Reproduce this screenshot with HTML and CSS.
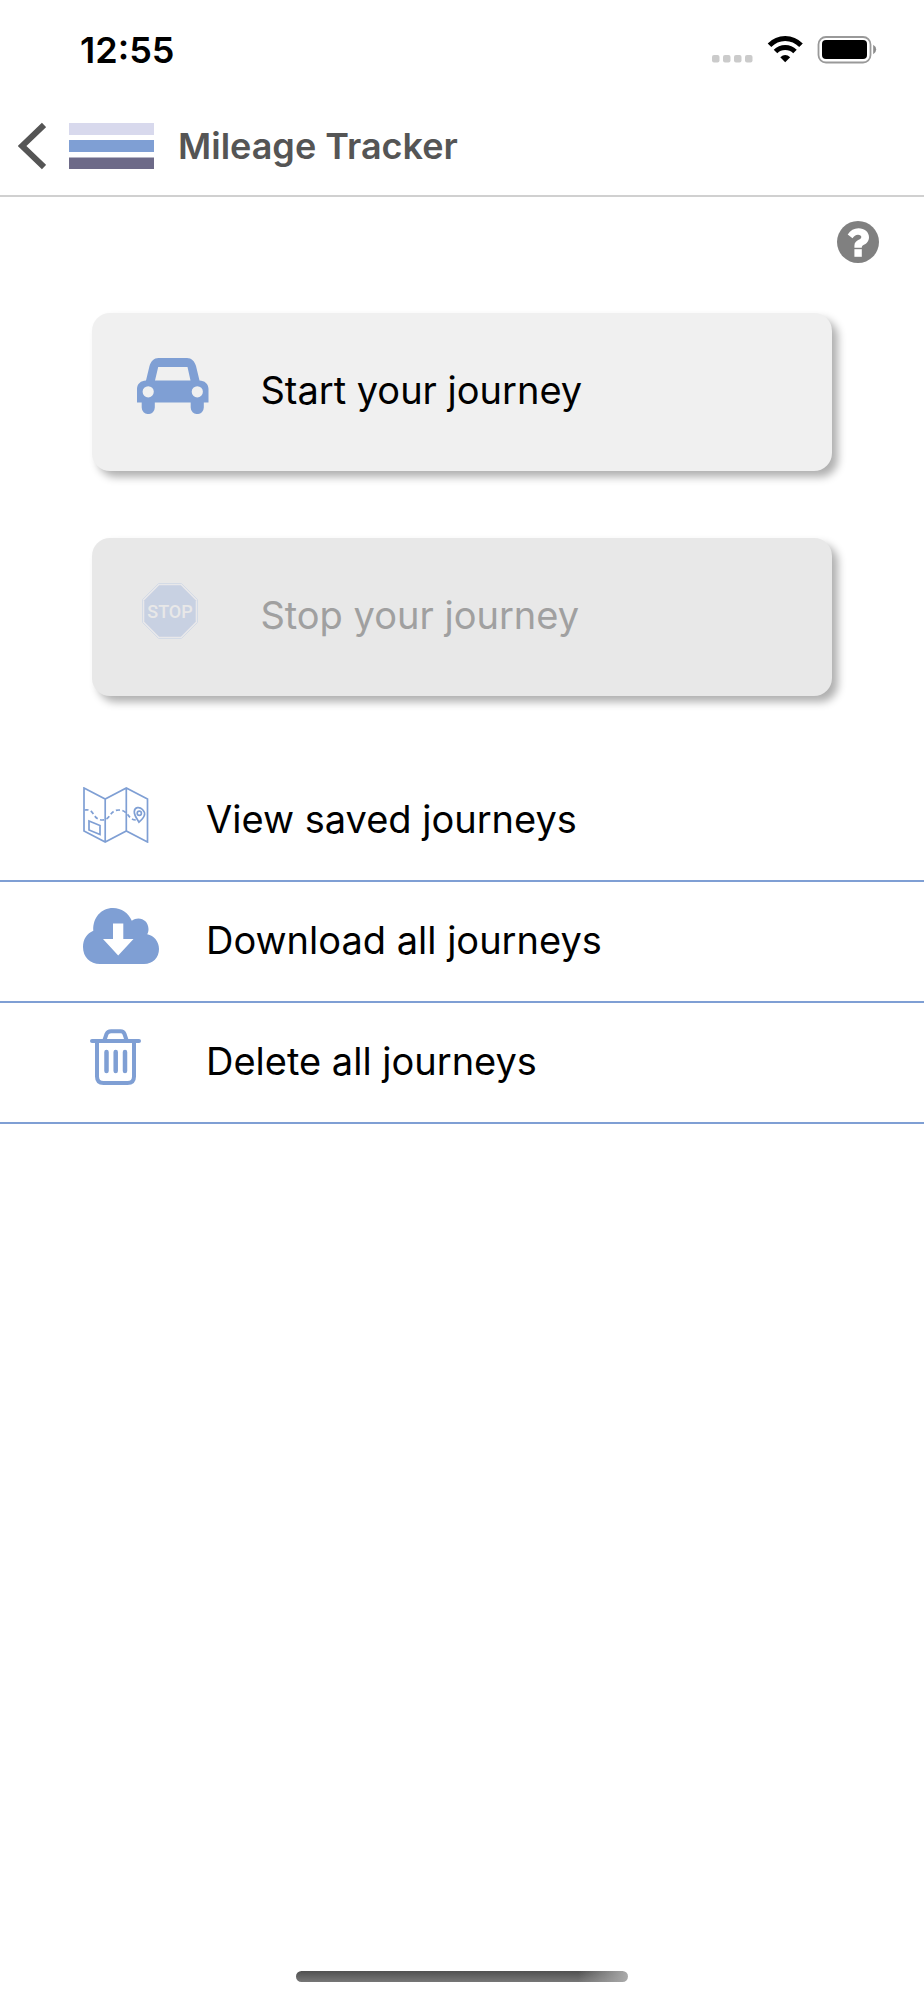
FILE: index.html
```html
<!DOCTYPE html>
<html lang="en">

<head>
    <meta charset="UTF-8">
    <meta name="viewport" content="width=device-width, initial-scale=1.0">
    <title>Mileage Tracker</title>
    <link rel="stylesheet" href="styles.css">
</head>

<body>
    <div class="statusBar">
        <span class="time">12:55</span>
        <svg class="statusIcons" width="166" height="28" viewBox="712 37 166 28">
            <g fill="#cbcbcb">
                <rect x="712" y="56" width="7.5" height="7.5" rx="2" />
                <rect x="723" y="56" width="7.5" height="7.5" rx="2" />
                <rect x="734" y="56" width="7.5" height="7.5" rx="2" />
                <rect x="745" y="56" width="7.5" height="7.5" rx="2" />
            </g>
            <g fill="none" stroke="#000" stroke-width="5">
                <path d="M769.5 46.3Q776 39.5 785.2 39.5T801 46.3" />
                <path d="M775.5 52.5Q779.5 48.5 785.2 48.5T795 52.5" />
            </g>
            <path d="M780.3 58.2Q785.2 53.8 790.2 58.2L785.2 63.2Z" />
            <rect x="818.5" y="38" width="52" height="25.5" rx="7.5" fill="#fff" stroke="#999" stroke-width="1.8" />
            <rect x="822" y="41" width="45" height="19" rx="4" />
            <path d="M873.2 45.7Q876.2 47.5 876.2 50.5T873.2 55.3Z" fill="#8c8c8c" />
        </svg>
    </div>

    <header class="header">
        <a href="#" class="back" aria-label="Back">
            <svg width="28" height="48" viewBox="0 0 28 48">
                <path d="M26 3L4 24L26 45" fill="none" stroke="#555" stroke-width="6" />
            </svg>
        </a>
        <svg class="logo" width="85" height="46" viewBox="0 0 85 46">
            <rect width="85" height="12" fill="#d8d9ed" />
            <rect y="17" width="85" height="12" fill="#7f9fd4" />
            <rect y="34.5" width="85" height="11.5" fill="#6d6a88" />
        </svg>
        <h1>Mileage Tracker</h1>
    </header>

    <main>
        <div class="helpRow">
            <button type="button" class="help" aria-label="Help">
                <svg width="42" height="42" viewBox="0 0 42 42">
                    <circle cx="21" cy="21" r="21" fill="#808080" />
                    <path d="M10.7 13.5C13.5 9.2 17 7.2 21.5 7.2C27.5 7.2 32 11 32 16.2C32 20.5 29.2 22.7 26.5 24C25.2 24.7 24.8 25.5 24.8 26.7H17.4V24.7C17.4 21.5 19.4 20 21.7 18.8C23.5 17.8 24.3 17.2 24.3 15.9C24.3 14.7 23 13.7 21 13.7C18.5 13.7 17.3 15 15.5 17.2Z" fill="#fff" />
                    <rect x="17.4" y="28.2" width="7.4" height="7.6" fill="#fff" />
                </svg>
            </button>
        </div>

        <div class="buttons">
            <button type="button" class="journeyBtn">
                <svg class="icon" viewBox="0 0 80 56">
                    <g fill="#7f9fd4">
                        <path fill-rule="evenodd" d="M1 44.5V31C1 26 5 22.5 10 22.5L13.5 8C15 3 18 0 22.5 0H51C55.5 0 58.5 3 60 8L63.5 22.5C68.5 22.5 72.5 26 72.5 31V44.5ZM19 22.5H54.5L51.5 9H22.2ZM12.2 28.2A5.6 5.6 0 1 0 12.2 39.4A5.6 5.6 0 1 0 12.2 28.2ZM61.3 28.2A5.6 5.6 0 1 0 61.3 39.4A5.6 5.6 0 1 0 61.3 28.2Z" />
                        <path d="M5.7 42H18.8V49.500A6.5 6.5 0 0 1 5.7 49.500ZM54.7 42H67.8V49.500A6.5 6.5 0 0 1 54.7 49.500Z" />
                    </g>
                </svg>
                <span>Start your journey</span>
            </button>
            <button type="button" class="journeyBtn" disabled>
                <svg class="icon" viewBox="0 0 80 56">
                    <path d="M22.5 .5H45.5L61.5 16.5V39.5L45.5 55.5H22.5L6.5 39.5V16.5Z" fill="#e8e8ea" stroke="#d4dbe6" />
                    <path d="M23.2 2.3H44.8L59.7 17.2V38.8L44.8 53.7H23.2L8.3 38.8V17.2Z" fill="#c8d1e2" />
                    <text class="stopText" x="34" y="35" text-anchor="middle">STOP</text>
                </svg>
                <span>Stop your journey</span>
            </button>
        </div>

        <nav class="menu">
            <a href="#">
                <svg class="icon" viewBox="0 0 80 56">
                    <g fill="none" stroke="#7f9fd4" stroke-width="1.7">
                        <path d="M2 1L23.2 12L44.3 1L65.5 12V55L44.3 44L23.2 55L2 44ZM23.2 12V55M44.3 1V44" />
                        <path d="M2.5 23C13 21 10 33 20.5 33C29 33 27 23 37 23C47 23 45 33 54.5 33" stroke-dasharray="4 2.5" />
                        <path d="M7 34V43L18 47.5V38.5Z" />
                        <path d="M57 35.2C54.3 31 52 28 52.3 24.5C52.7 20 57.5 19.5 60.5 22.5C64.5 26.5 62.5 30.5 57 35.2Z" />
                        <circle cx="57.3" cy="26.3" r="2.1" />
                    </g>
                </svg>
                <span>View saved journeys</span>
            </a>
            <a href="#">
                <svg class="icon" viewBox="0 0 80 56">
                    <path d="M18 56C8 56 1 49 1 39C1 31 5 25.500 11.3 22.7C10.5 10 19 0 31 0C39.5 0 46.5 5 49.8 12.7C57 7.5 66.5 12 66.5 21C66.5 23 66.2 24.5 65.2 26.2C72 27.5 77 33.5 77 41C77 49.5 71 56 62 56Z" fill="#7f9fd4" />
                    <path d="M31 15.5H41.3V31H51.5L36.2 47.5L21 31H31Z" fill="#fff" />
                </svg>
                <span>Download all journeys</span>
            </a>
            <a href="#">
                <svg class="icon" viewBox="0 0 80 56">
                    <g fill="none" stroke="#7f9fd4" stroke-width="4">
                        <path d="M10 12H57" stroke-linecap="round" />
                        <path d="M15 12V47.5Q15 54 21.5 54H45.5Q52 54 52 47.5V12M22.5 11L24.5 5Q25.7 2.3 29 2.3H38.5Q41.5 2.3 42.5 5L44.5 11" />
                        <path d="M24.5 23V42M33.7 23V42M43 23V42" stroke-width="4.5" stroke-linecap="round" />
                    </g>
                </svg>
                <span>Delete all journeys</span>
            </a>
        </nav>
    </main>

    <div class="homeBar"></div>
</body>

</html>
```
FILE: styles.css
```css
* {
    box-sizing: border-box;
}

body {
    display: flex;
    flex-direction: column;
    min-height: 100vh;
    margin: 0;
    background-color: #fff;
    color: #000;
    font-family: Inter, "Liberation Sans", sans-serif;
}

svg {
    display: block;
    flex-shrink: 0;
}

.statusBar {
    display: flex;
    align-items: center;
    justify-content: space-between;
    height: 100px;
    padding: 0 46px 0 80px;
}

.time {
    font-size: 36px;
    font-weight: 600;
}

.header {
    display: flex;
    align-items: center;
    height: 97px;
    padding: 0 18px 4px;
    border-bottom: 2px solid #d0d0d0;
}

.logo {
    margin-left: 23px;
}

.header h1 {
    margin: 0 0 0 24px;
    color: #555;
    font-size: 36px;
    font-weight: 600;
}

main {
    flex: 1;
}

.helpRow {
    display: flex;
    justify-content: flex-end;
    padding: 24px 45px 50px;
}

.help {
    padding: 0;
    border: 0;
    background: none;
}

.buttons {
    display: flex;
    flex-direction: column;
    gap: 67px;
    padding: 0 10%;
}

.journeyBtn,
.menu a {
    display: flex;
    align-items: flex-end;
    gap: 44px;
    color: #000;
    font-family: inherit;
    font-size: 38px;
    line-height: 48px;
    text-align: left;
    text-decoration: none;
}

.journeyBtn {
    padding: 45px 44px 57px;
    border: 0;
    border-radius: 18px;
    background-color: #f0f0f0;
    box-shadow: 6px 6px 8px #b0b0b0;
}

.journeyBtn:disabled {
    background-color: #e8e8e8;
    color: #a0a0a0;
}

.icon {
    width: 80px;
    height: 56px;
}

.stopText {
    fill: #e8e8e8;
    font-family: Roboto, "Liberation Sans", sans-serif;
    font-size: 18px;
    font-weight: 500;
}

.menu {
    margin-top: 65px;
}

.menu a {
    padding: 26px 82px 37px;
    border-bottom: 2px solid #7f9fd4;
}

.homeBar {
    width: 36%;
    height: 11px;
    margin: 0 auto 18px;
    border-radius: 6px;
    background: linear-gradient(to right, transparent 85%, #aaa), linear-gradient(#505050, #777);
}
```
